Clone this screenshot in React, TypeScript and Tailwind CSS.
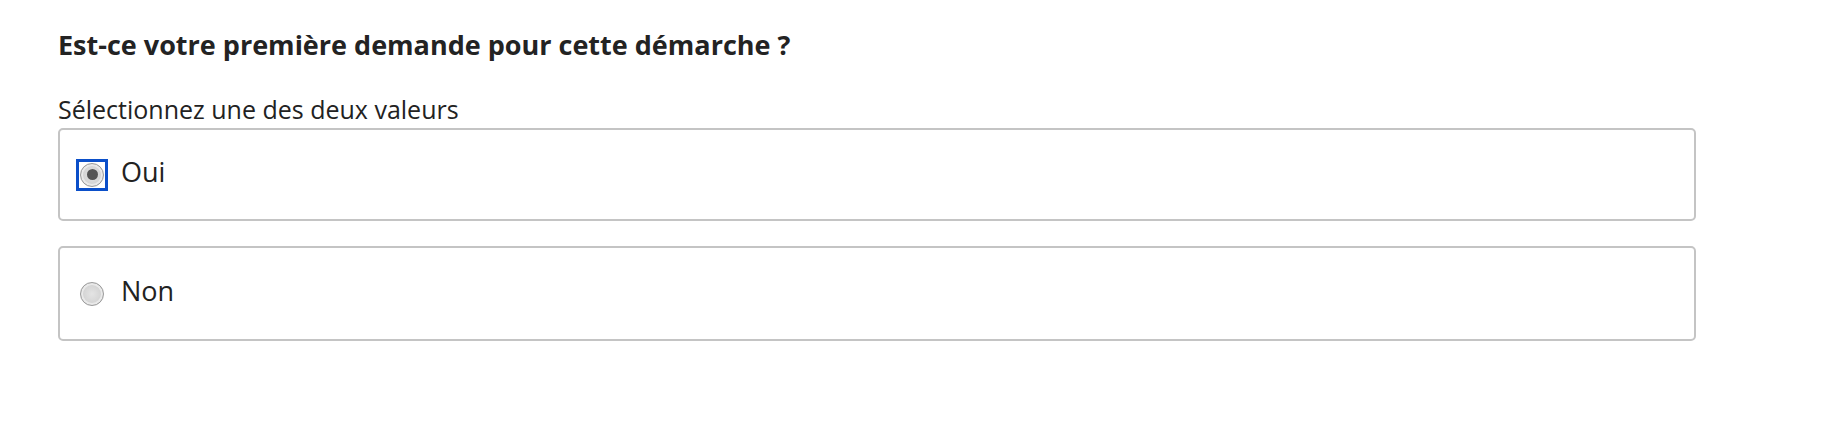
import React from "react";

function Radio({ checked }: { checked: boolean }) {
  return (
    <span className="relative flex h-[24px] w-[24px] shrink-0 items-center justify-center rounded-full border border-[#9a9a9a] bg-[radial-gradient(circle_at_50%_50%,#e4e4e4_0%,#d4d4d4_60%,#c8c8c8_100%)] shadow-[inset_0_0_0_2px_#e9e9e9]">
      {checked && <span className="block h-[11px] w-[11px] rounded-full bg-[#555555]" />}
    </span>
  );
}

function Option({ label, checked, h }: { label: string; checked: boolean; h: string }) {
  return (
    <label className={`flex ${h} w-[1638px] items-center rounded-[5px] border-2 border-[#c4c4c4] bg-white pl-[20px]`}>
      {checked ? (
        <span className="flex items-center justify-center outline-[3px] outline-solid outline-[#0b4fc9] outline-offset-[1px]">
          <Radio checked />
        </span>
      ) : (
        <Radio checked={false} />
      )}
      <span className="mb-[5px] ml-[17px] text-[27px] leading-[32px] text-[#222222]">{label}</span>
    </label>
  );
}

export default function App() {
  return (
    <div className="h-[434px] w-full bg-white pl-[58px] pt-[29px] font-['Open_Sans',sans-serif] text-[#222222]">
      <h1 className="text-[27px] font-bold leading-[32px] text-[#232323]">
        Est-ce votre première demande pour cette démarche ?
      </h1>
      <div className="mt-[34px] mb-[5px] text-[25px] leading-[28px] text-[#222222]">
        Sélectionnez une des deux valeurs
      </div>
      <div className="flex flex-col gap-[25px]">
        <Option label="Oui" checked h="h-[93px]" />
        <Option label="Non" checked={false} h="h-[95px]" />
      </div>
    </div>
  );
}
